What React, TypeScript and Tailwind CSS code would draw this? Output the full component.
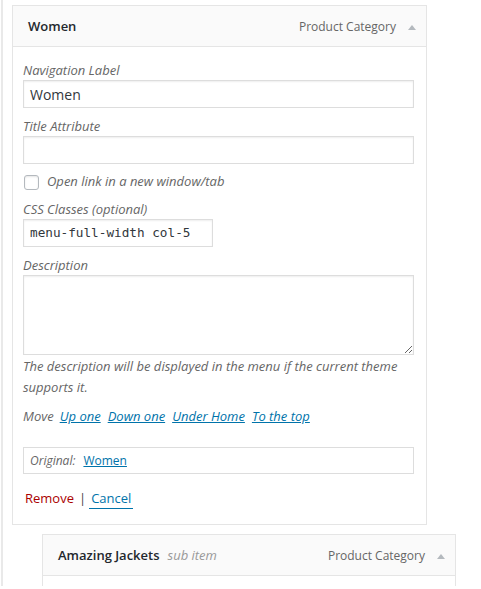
export default function App() {
  return (
    <div className="h-[589px] bg-white font-['Open_Sans','Liberation_Sans',sans-serif] text-[13px] text-[#444]">
      <div className="ml-[1px] h-[586px] border-l-2 border-[#e9e9e9] pl-[9px] pt-[5px]">
        {/* Expanded menu item */}
        <div className="w-[415px] border border-[#e5e5e5] bg-white">
          <div className="flex h-[41px] items-center border-b border-[#e5e5e5] bg-[#fafafa] pl-[15px] pr-[10px] pt-[2px]">
            <span className="flex-1 font-semibold text-[#23282d]">Women</span>
            <span className="text-[12px] text-[#666]">Product Category</span>
            <svg width="8" height="5" viewBox="0 0 8 5" className="ml-[12px]">
              <path d="M0 5 L4 0 L8 5 Z" fill="#b4b9be" />
            </svg>
          </div>

          <div className="px-[10px] pb-[16px] pt-[14px]">
            <label className="block italic leading-[19px] text-[#666]">Navigation Label</label>
            <div className="flex h-[28px] w-[391px] items-center border border-[#ddd] px-[6px] text-[14px] text-[#32373c] shadow-[inset_0_1px_2px_rgba(0,0,0,0.07)]">
              Women
            </div>

            <label className="mt-[9px] block italic leading-[19px] text-[#666]">Title Attribute</label>
            <div className="h-[28px] w-[391px] border border-[#ddd] shadow-[inset_0_1px_2px_rgba(0,0,0,0.07)]" />

            <div className="mt-[8px] flex h-[20px] items-center">
              <span className="ml-[1px] h-[15px] w-[15px] rounded-[3px] border border-[#b4b9be] bg-white shadow-[inset_0_1px_2px_rgba(0,0,0,0.1)]" />
              <span className="ml-[8px] italic text-[#666]">Open link in a new window/tab</span>
            </div>

            <label className="mt-[8px] block italic leading-[19px] text-[#666]">CSS Classes (optional)</label>
            <div className="flex h-[28px] w-[190px] items-center border border-[#ddd] px-[6px] font-['DejaVu_Sans_Mono','Liberation_Mono',monospace] text-[12.7px] text-[#32373c] shadow-[inset_0_1px_2px_rgba(0,0,0,0.07)]">
              menu-full-width col-5
            </div>

            <label className="mt-[9px] block italic leading-[19px] text-[#666]">Description</label>
            <textarea className="block h-[80px] w-[391px] resize border border-[#ddd] shadow-[inset_0_1px_2px_rgba(0,0,0,0.07)] outline-none" />

            <p className="mt-[1px] w-[391px] italic leading-[21px] text-[#666]">
              The description will be displayed in the menu if the current theme supports it.
            </p>

            <div className="mt-[8px] flex gap-[7px] italic leading-[21px] text-[#666]">
              <span className="mr-[-1px]">Move</span>
              <a className="text-[#0073aa] underline">Up one</a>
              <a className="text-[#0073aa] underline">Down one</a>
              <a className="text-[#0073aa] underline">Under Home</a>
              <a className="text-[#0073aa] underline">To the top</a>
            </div>

            <div className="mt-[20px] flex h-[27px] w-[391px] items-center gap-[8px] border border-[#ddd] px-[6px] text-[12px]">
              <span className="italic text-[#666]">Original:</span>
              <a className="text-[#0073aa] underline">Women</a>
            </div>

            <div className="mt-[14px] flex h-[20px] items-center leading-[20px]">
              <a className="ml-[2px] text-[#a00]">Remove</a>
              <span className="ml-[5px] mr-[3px] text-[#444]">|</span>
              <a className="border-b border-[#0073aa] px-[2px] text-[#0073aa]">Cancel</a>
            </div>
          </div>
        </div>

        {/* Collapsed sub item */}
        <div className="ml-[30px] mt-[9px] h-[52px] w-[414px] border border-b-0 border-[#e5e5e5] bg-white">
          <div className="flex h-[41px] items-center border-b border-[#e5e5e5] bg-[#fafafa] pl-[15px] pr-[10px] pt-[2px]">
            <span className="font-semibold text-[#23282d]">Amazing Jackets</span>
            <span className="ml-[8px] flex-1 italic text-[#999]">sub item</span>
            <span className="text-[12px] text-[#666]">Product Category</span>
            <svg width="8" height="5" viewBox="0 0 8 5" className="ml-[12px]">
              <path d="M0 5 L4 0 L8 5 Z" fill="#b4b9be" />
            </svg>
          </div>
        </div>
      </div>
    </div>
  );
}
